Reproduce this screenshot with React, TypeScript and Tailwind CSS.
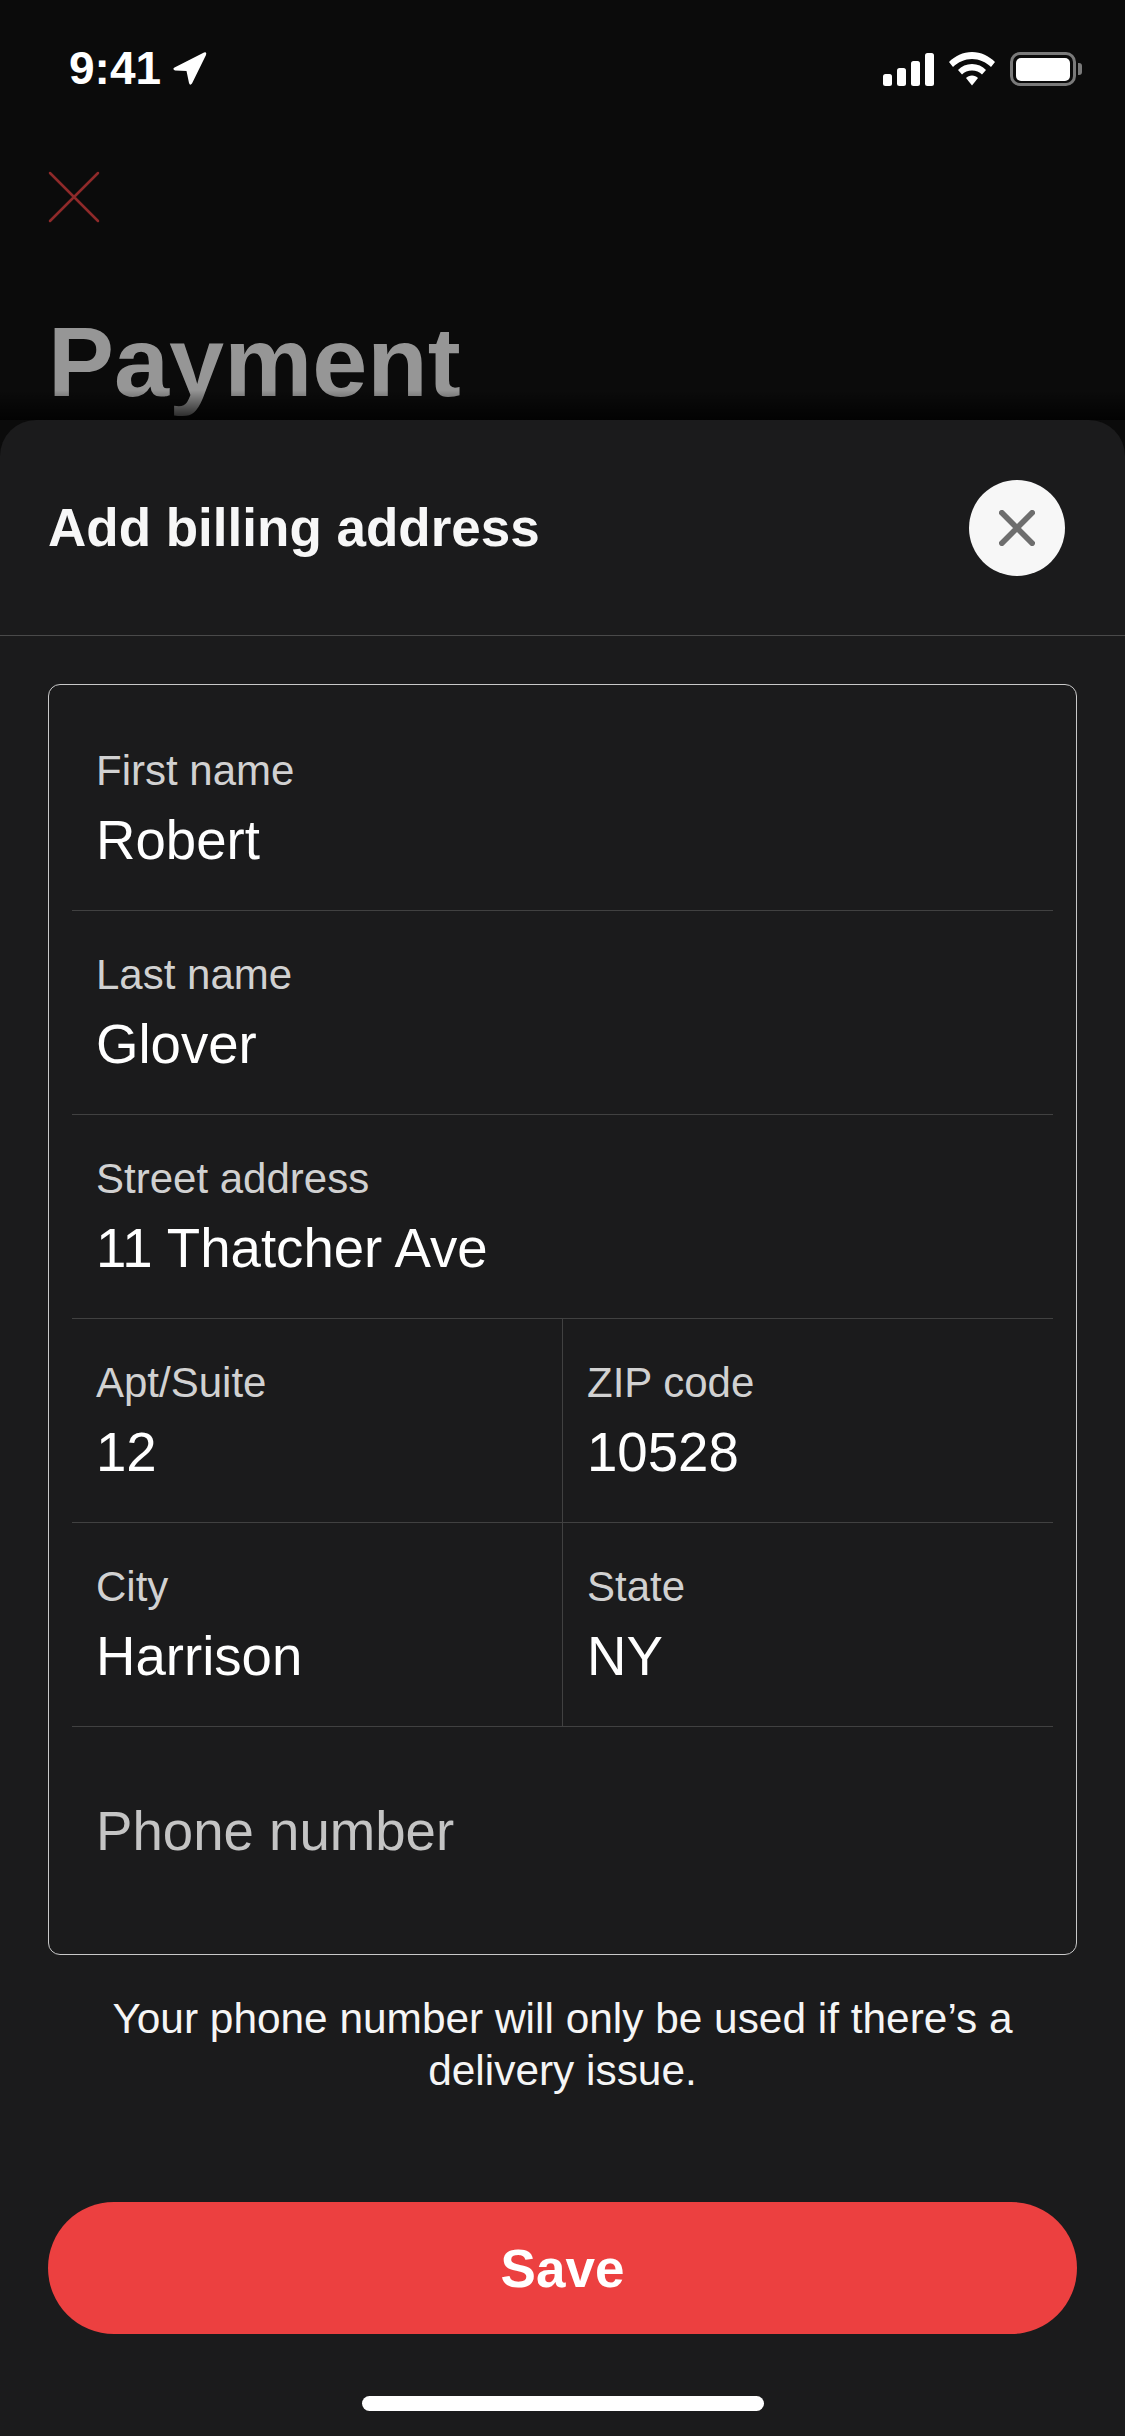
const font = { fontFamily: '"Liberation Sans", Arial, sans-serif' };

function Field({ label, value, className = "" }: { label: string; value: string; className?: string }) {
  return (
    <div className={`flex flex-col ${className}`}>
      <span className="mt-[1px] text-[42px] leading-[48px] text-[#d1d1d1]">{label}</span>
      <span className="mt-[14px] text-[54.6px] leading-[64px] text-white">{value}</span>
    </div>
  );
}

function StatusBar() {
  return (
    <div className="flex h-[140px] items-start justify-between pl-[69px] pr-[43px] pt-[42px]">
      <div className="flex items-center">
        <span className="text-[46px] leading-[52px] font-bold text-white">9:41</span>
        <svg width="36" height="36" viewBox="0 0 36 36" className="ml-[11px]">
          <path d="M2.5 17.5 L32 2.5 Q35 1.5 34 5 L20 33.5 Q18 36 17 33 L14.5 21 L3 20.5 Q0 19 2.5 17.5Z" fill="#fff" />
        </svg>
      </div>
      <div className="flex items-center pt-[10px]">
        <svg width="52" height="33" viewBox="0 0 52 33" fill="#fff" className="mr-[14px]">
          <rect x="0" y="21" width="9" height="12" rx="2.5" />
          <rect x="14" y="15" width="9" height="18" rx="2.5" />
          <rect x="28" y="8" width="9" height="25" rx="2.5" />
          <rect x="42" y="0" width="9" height="33" rx="2.5" />
        </svg>
        <svg width="46" height="34" viewBox="0 0 46 34" fill="#fff" className="mr-[15px]">
          <path d="M23 0 C32 0 40 4 46 10 L42 15 C37 10 30 7 23 7 C16 7 9 10 4 15 L0 10 C6 4 14 0 23 0Z" />
          <path d="M23 12 C28.5 12 33.5 14 37 18 L33 22.5 C30.5 20 27 18.5 23 18.5 C19 18.5 15.5 20 13 22.5 L9 18 C12.5 14 17.5 12 23 12Z" />
          <path d="M23 23.5 C25.5 23.5 27.5 24.5 29 26 L23 33.5 L17 26 C18.5 24.5 20.5 23.5 23 23.5Z" />
        </svg>
        <div className="flex items-center">
          <div className="flex h-[34px] w-[66px] items-center justify-center rounded-[10px] border-[3px] border-[#7a7a7a]">
            <div className="h-[23px] w-[54px] rounded-[5px] bg-white" />
          </div>
          <div className="ml-[2px] h-[12px] w-[4px] rounded-r-[3px] bg-[#7a7a7a]" />
        </div>
      </div>
    </div>
  );
}

export default function App() {
  return (
    <div className="flex h-[2436px] w-[1125px] flex-col overflow-hidden bg-[#0b0b0b]" style={font}>
      {/* dimmed page behind the sheet */}
      <div className="relative h-[420px] shrink-0 overflow-hidden">
        <StatusBar />
        <svg width="52" height="52" viewBox="0 0 52 52" className="ml-[48px] mt-[31px]" stroke="#8f2a2a" strokeWidth="2.5" strokeLinecap="round">
          <path d="M2 2 L50 50 M50 2 L2 50" />
        </svg>
        <div className="ml-[48px] mt-[82px] text-[99px] leading-[114px] font-bold text-[#969696]">Payment</div>
        <div className="absolute inset-x-0 bottom-0 h-[30px] bg-gradient-to-b from-transparent to-black/80" />
      </div>

      {/* sheet */}
      <div className="flex flex-1 flex-col rounded-t-[36px] bg-[#1b1b1c]">
        <div className="flex h-[216px] shrink-0 items-center justify-between border-b border-[#4a4a4a] pl-[48px] pr-[60px]">
          <h1 className="text-[53px] leading-[60px] font-bold text-[#f7f7f7]">Add billing address</h1>
          <button type="button" className="flex h-[96px] w-[96px] items-center justify-center rounded-full bg-[#f7f7f7]">
            <svg width="36" height="36" viewBox="0 0 38 38" stroke="#6e6e6e" strokeWidth="6" strokeLinecap="round">
              <path d="M3 3 L35 35 M35 3 L3 35" />
            </svg>
          </button>
        </div>

        <div className="mx-[48px] mt-[48px] flex h-[1271px] shrink-0 flex-col rounded-[12px] border border-[#c9c9c9] px-[23px]">
          <div className="h-[226px] border-b border-[#414141] pl-[24px] pt-[61px]">
            <Field label="First name" value="Robert" />
          </div>
          <div className="h-[204px] border-b border-[#414141] pl-[24px] pt-[39px]">
            <Field label="Last name" value="Glover" />
          </div>
          <div className="h-[204px] border-b border-[#414141] pl-[24px] pt-[39px]">
            <Field label="Street address" value="11 Thatcher Ave" />
          </div>
          <div className="flex h-[204px] border-b border-[#414141]">
            <Field label="Apt/Suite" value="12" className="w-[491px] border-r border-[#414141] pl-[24px] pt-[39px]" />
            <Field label="ZIP code" value="10528" className="flex-1 pl-[24px] pt-[39px]" />
          </div>
          <div className="flex h-[204px] border-b border-[#414141]">
            <Field label="City" value="Harrison" className="w-[491px] border-r border-[#414141] pl-[24px] pt-[39px]" />
            <Field label="State" value="NY" className="flex-1 pl-[24px] pt-[39px]" />
          </div>
          <div className="flex flex-1 items-center pl-[24px] pb-[18px]">
            <span className="text-[54.6px] leading-[60px] text-[#c4c4c4]">Phone number</span>
          </div>
        </div>

        <p className="mx-auto mt-[38px] w-[960px] text-center text-[42.4px] leading-[52px] text-[#f5f5f5]">
          Your phone number will only be used if there’s a delivery issue.
        </p>

        <button type="button" className="mx-[48px] mt-[105px] flex h-[132px] shrink-0 items-center justify-center rounded-full bg-[#ec4040] pt-[2px] text-[53px] font-bold text-white">
          Save
        </button>

        <div className="mx-auto mt-[62px] h-[15px] w-[402px] rounded-full bg-white" />
      </div>
    </div>
  );
}
